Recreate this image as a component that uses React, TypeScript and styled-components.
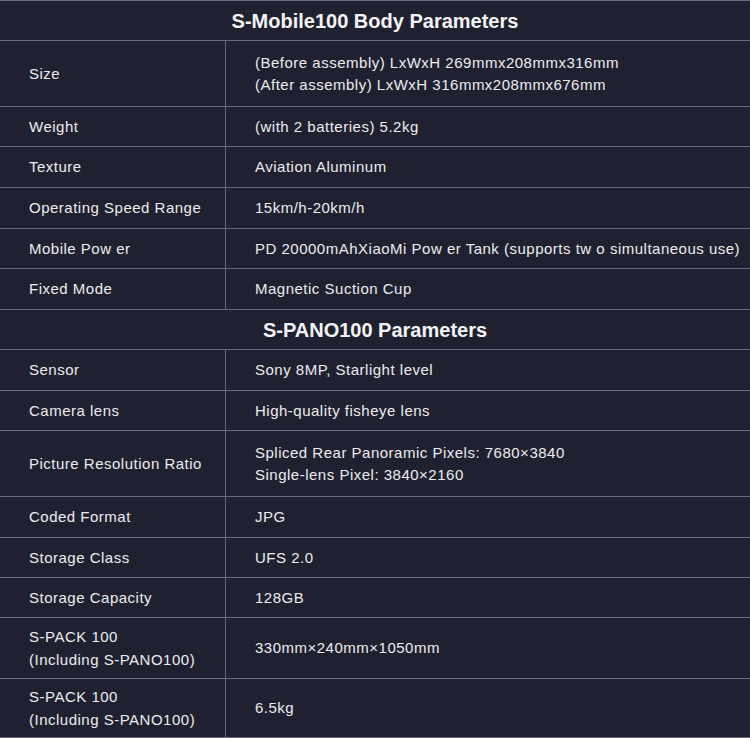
import React from "react";
import styled, { createGlobalStyle } from "styled-components";

const Global = createGlobalStyle`
  html, body { margin: 0; padding: 0; background: #1f2130; }
  body { font-family: "Liberation Sans", Arial, sans-serif; }
`;

const Table = styled.div`
  width: 750px;
  border-top: 1px solid #666979;
  background: #1f2130;
  color: #ececef;
`;

const Row = styled.div<{ $h: number }>`
  box-sizing: border-box;
  height: ${(p) => p.$h}px;
  display: grid;
  grid-template-columns: 226px 1fr;
  border-bottom: 1px solid #666979;
`;

const TitleRow = styled.div<{ $h: number }>`
  box-sizing: border-box;
  height: ${(p) => p.$h}px;
  display: flex;
  align-items: center;
  justify-content: center;
  border-bottom: 1px solid #666979;
  font-weight: bold;
  font-size: 20px;
  padding-top: 1px;
  color: #f4f4f6;
`;

const LabelCell = styled.div`
  box-sizing: border-box;
  border-right: 1px solid #666979;
  display: flex;
  align-items: center;
  padding-left: 29px;
  padding-top: 1px;
  font-size: 15px;
  letter-spacing: 0.5px;
  line-height: 22.5px;
`;

const ValueCell = styled.div`
  display: flex;
  align-items: center;
  padding-left: 29px;
  padding-top: 1px;
  font-size: 15px;
  letter-spacing: 0.5px;
  line-height: 22.5px;
  white-space: nowrap;
`;

type Item =
  | { kind: "title"; text: string; h: number }
  | { kind: "row"; label: React.ReactNode; value: React.ReactNode; h: number };

const pack = (
  <>
    S-PACK 100
    <br />
    (Including S-PANO100)
  </>
);

const items: Item[] = [
  { kind: "title", text: "S-Mobile100 Body Parameters", h: 40 },
  {
    kind: "row",
    label: "Size",
    value: (
      <>
        (Before assembly) LxWxH 269mmx208mmx316mm
        <br />
        (After assembly) LxWxH 316mmx208mmx676mm
      </>
    ),
    h: 66,
  },
  { kind: "row", label: "Weight", value: "(with 2 batteries) 5.2kg", h: 40 },
  { kind: "row", label: "Texture", value: "Aviation Aluminum", h: 41 },
  { kind: "row", label: "Operating Speed Range", value: "15km/h-20km/h", h: 41 },
  {
    kind: "row",
    label: "Mobile Pow er",
    value: "PD 20000mAhXiaoMi Pow er Tank (supports tw o simultaneous use)",
    h: 40,
  },
  { kind: "row", label: "Fixed Mode", value: "Magnetic Suction Cup", h: 41 },
  { kind: "title", text: "S-PANO100 Parameters", h: 40 },
  { kind: "row", label: "Sensor", value: "Sony 8MP, Starlight level", h: 41 },
  { kind: "row", label: "Camera lens", value: "High-quality fisheye lens", h: 40 },
  {
    kind: "row",
    label: "Picture Resolution Ratio",
    value: (
      <>
        Spliced Rear Panoramic Pixels: 7680×3840
        <br />
        Single-lens Pixel: 3840×2160
      </>
    ),
    h: 66,
  },
  { kind: "row", label: "Coded Format", value: "JPG", h: 41 },
  { kind: "row", label: "Storage Class", value: "UFS 2.0", h: 40 },
  { kind: "row", label: "Storage Capacity", value: "128GB", h: 40 },
  { kind: "row", label: pack, value: "330mm×240mm×1050mm", h: 61 },
  { kind: "row", label: pack, value: "6.5kg", h: 59 },
];

export default function App() {
  return (
    <>
      <Global />
      <Table>
        {items.map((it, i) =>
          it.kind === "title" ? (
            <TitleRow key={i} $h={it.h}>
              {it.text}
            </TitleRow>
          ) : (
            <Row key={i} $h={it.h}>
              <LabelCell>
                <div>{it.label}</div>
              </LabelCell>
              <ValueCell>
                <div>{it.value}</div>
              </ValueCell>
            </Row>
          )
        )}
      </Table>
    </>
  );
}
